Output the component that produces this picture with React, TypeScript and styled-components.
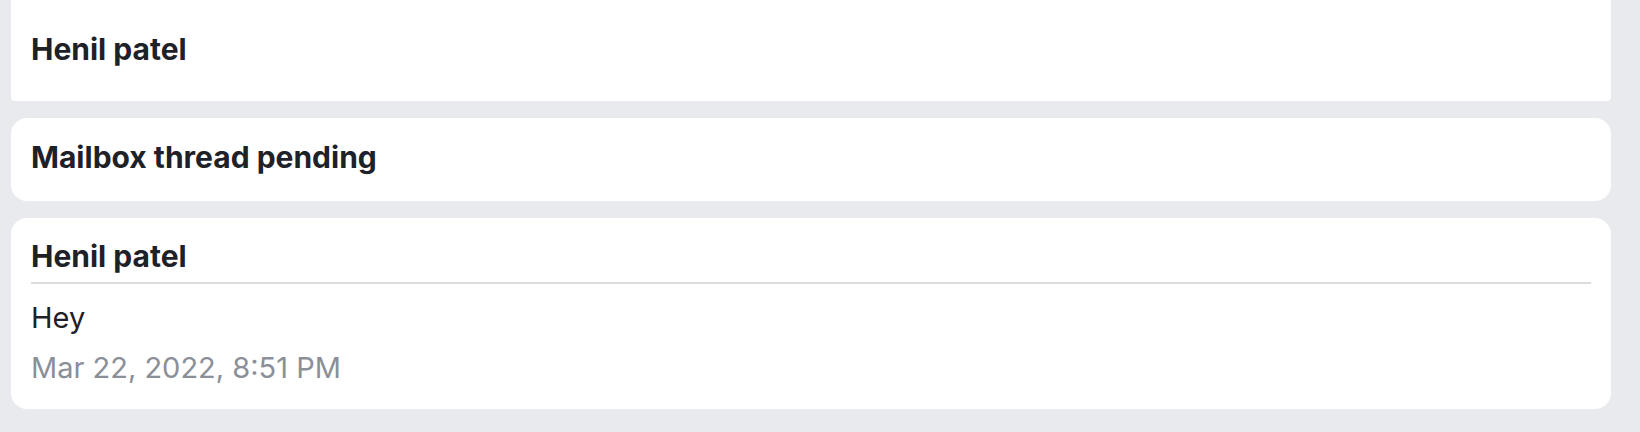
import React from 'react';
import styled, { createGlobalStyle } from 'styled-components';

const GlobalStyle = createGlobalStyle`
  html, body {
    margin: 0;
    padding: 0;
    background: #e9eaed;
  }

  body {
    font-family: Inter, 'Noto Sans', 'Liberation Sans', sans-serif;
    color: #1f2128;
  }
`;

const thread = {
  contact: 'Henil patel',
  status: 'Mailbox thread pending',
  messages: [
    {
      id: 1,
      author: 'Henil patel',
      body: 'Hey',
      sentAt: 'Mar 22, 2022, 8:51 PM',
    },
  ],
};

function App() {
  return (
    <>
      <GlobalStyle />
      <Page>
        <Header>
          <Title>{thread.contact}</Title>
        </Header>

        <StatusCard>
          <Title>{thread.status}</Title>
        </StatusCard>

        {thread.messages.map((message) => (
          <MessageCard key={message.id}>
            <Author>{message.author}</Author>
            <Body>{message.body}</Body>
            <Timestamp>{message.sentAt}</Timestamp>
          </MessageCard>
        ))}
      </Page>
    </>
  );
}

const Page = styled.div`
  display: flex;
  flex-direction: column;
  gap: 17px;
  padding: 0 29px 23px 11px;
`;

const Card = styled.section`
  background: #ffffff;
  border-radius: 16px;
  padding: 0 20px;
`;

const Header = styled(Card)`
  border-radius: 0 0 4px 4px;
  padding-top: 31px;
  padding-bottom: 33px;
`;

const StatusCard = styled(Card)`
  padding-top: 21px;
  padding-bottom: 25px;
`;

const MessageCard = styled(Card)`
  display: flex;
  flex-direction: column;
  padding-top: 20px;
  padding-bottom: 23px;
`;

const Title = styled.h2`
  margin: 0;
  font-size: 30px;
  line-height: 37px;
  font-weight: 700;
  color: #1f2128;
`;

const Author = styled(Title)`
  padding-bottom: 7px;
  border-bottom: 2px solid #dcdce0;
  margin-bottom: 16px;
`;

const Body = styled.p`
  margin: 0 0 14px;
  font-size: 29px;
  line-height: 36px;
  color: #1f2128;
`;

const Timestamp = styled.time`
  font-size: 29px;
  line-height: 36px;
  color: #8a8f98;
`;

export default App;
